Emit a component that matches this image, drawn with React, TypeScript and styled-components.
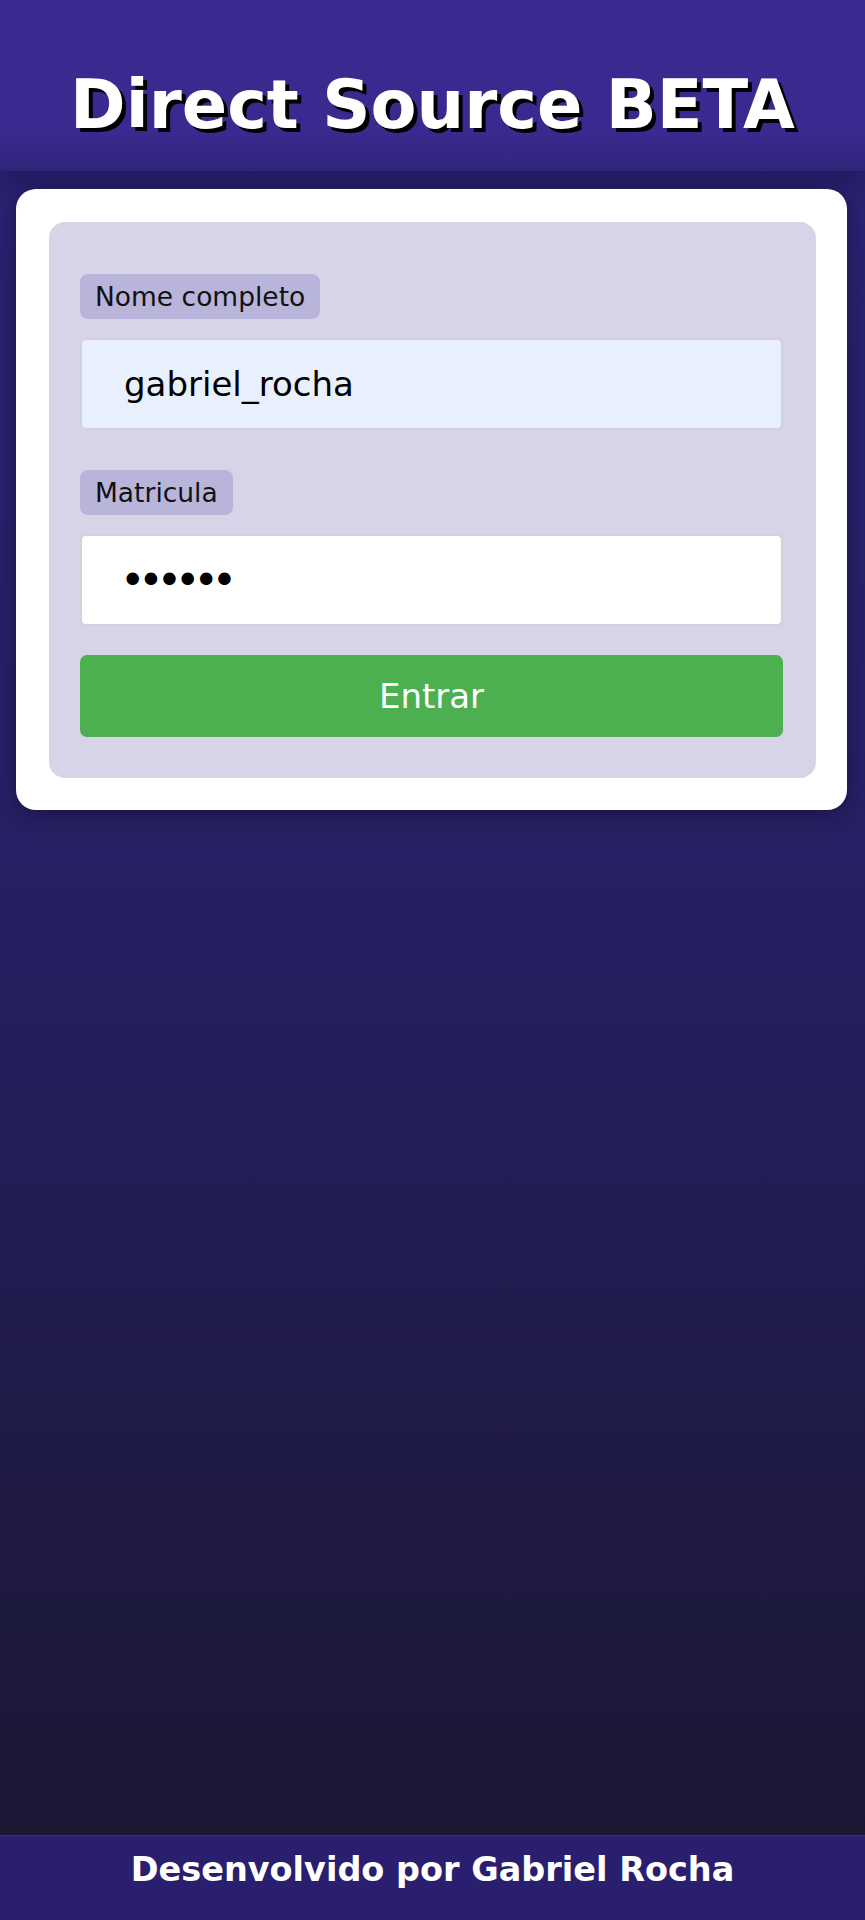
import React from "react";
import styled, { createGlobalStyle } from "styled-components";

const GlobalStyle = createGlobalStyle`
  html, body {
    margin: 0;
    padding: 0;
  }
  body {
    font-family: "DejaVu Sans", Verdana, sans-serif;
    background: #1a1631;
  }
  * { box-sizing: border-box; }
`;

const Page = styled.div`
  min-height: 100vh;
  display: flex;
  flex-direction: column;
  background: linear-gradient(180deg, #2c2276 0%, #262064 45%, #19162f 100%);
`;

const Header = styled.header`
  background: linear-gradient(180deg, #3a2a8f 0%, #3a2a8f 78%, #302479 100%);
  padding: 66px 0 27px;
  box-shadow: 0 10px 24px rgba(0, 0, 0, 0.22);
  position: relative;
  z-index: 1;
`;

const Title = styled.h1`
  margin: 0;
  text-align: center;
  color: #ffffff;
  font-family: "DejaVu Sans", Verdana, sans-serif;
  font-weight: bold;
  font-size: 67px;
  line-height: normal;
  text-shadow: 4px 4px 0 #000000;
`;

const Main = styled.main`
  flex: 1;
  padding: 18px 18px 0 16px;
  position: relative;
  z-index: 2;
`;

const Card = styled.div`
  background: #ffffff;
  border-radius: 20px;
  padding: 33px 31px 32px 33px;
  box-shadow: 0 4px 22px rgba(0, 0, 0, 0.35);
`;

const Panel = styled.form`
  background: #d8d4e8;
  border-radius: 16px;
  padding: 52px 33px 41px 31px;
  display: flex;
  flex-direction: column;
  align-items: flex-start;
`;

const Label = styled.label<{ $gap?: number }>`
  display: inline-block;
  background: #b8b4da;
  color: #111111;
  font-family: "DejaVu Sans", Verdana, sans-serif;
  font-size: 26.5px;
  line-height: 31px;
  padding: 7px 15px;
  border-radius: 8px;
  margin-top: ${(p) => p.$gap ?? 0}px;
  margin-bottom: 19px;
`;

const Input = styled.input<{ $filled?: boolean; $secret?: boolean }>`
  width: 100%;
  height: 92px;
  border: 2px solid #d2d0dc;
  border-radius: 6px;
  background: ${(p) => (p.$filled ? "#e8f0fe" : "#ffffff")};
  color: #000000;
  font-family: "DejaVu Sans", Verdana, sans-serif;
  font-size: ${(p) => (p.$secret ? "43px" : "34px")};
  letter-spacing: ${(p) => (p.$secret ? "-7px" : "normal")};
  padding: 0 0 0 ${(p) => (p.$secret ? "38px" : "42px")};
  outline: none;
`;

const Button = styled.button`
  width: 100%;
  height: 82px;
  margin-top: 29px;
  border: none;
  border-radius: 7px;
  background: #4caf50;
  color: #ffffff;
  font-family: "DejaVu Sans", Verdana, sans-serif;
  font-size: 34px;
  cursor: pointer;
`;

const Footer = styled.footer`
  height: 85px;
  background: #2a1f6e;
  border-top: 1px solid #3b3468;
  padding-top: 14px;
  text-align: center;
  color: #ffffff;
  font-family: "DejaVu Sans", Verdana, sans-serif;
  font-weight: bold;
  font-size: 33.5px;
  line-height: normal;
`;

export default function App() {
  const [name, setName] = React.useState("gabriel_rocha");
  const [mat, setMat] = React.useState("123456");
  return (
    <>
      <GlobalStyle />
      <Page>
        <Header>
          <Title>Direct Source BETA</Title>
        </Header>
        <Main>
          <Card>
            <Panel onSubmit={(e) => e.preventDefault()}>
              <Label htmlFor="nome">Nome completo</Label>
              <Input
                id="nome"
                $filled
                value={name}
                onChange={(e) => setName(e.target.value)}
              />
              <Label htmlFor="mat" $gap={40}>
                Matricula
              </Label>
              <Input
                id="mat"
                type="password"
                $secret
                value={mat}
                onChange={(e) => setMat(e.target.value)}
              />
              <Button type="submit">Entrar</Button>
            </Panel>
          </Card>
        </Main>
        <Footer>Desenvolvido por Gabriel Rocha</Footer>
      </Page>
    </>
  );
}
